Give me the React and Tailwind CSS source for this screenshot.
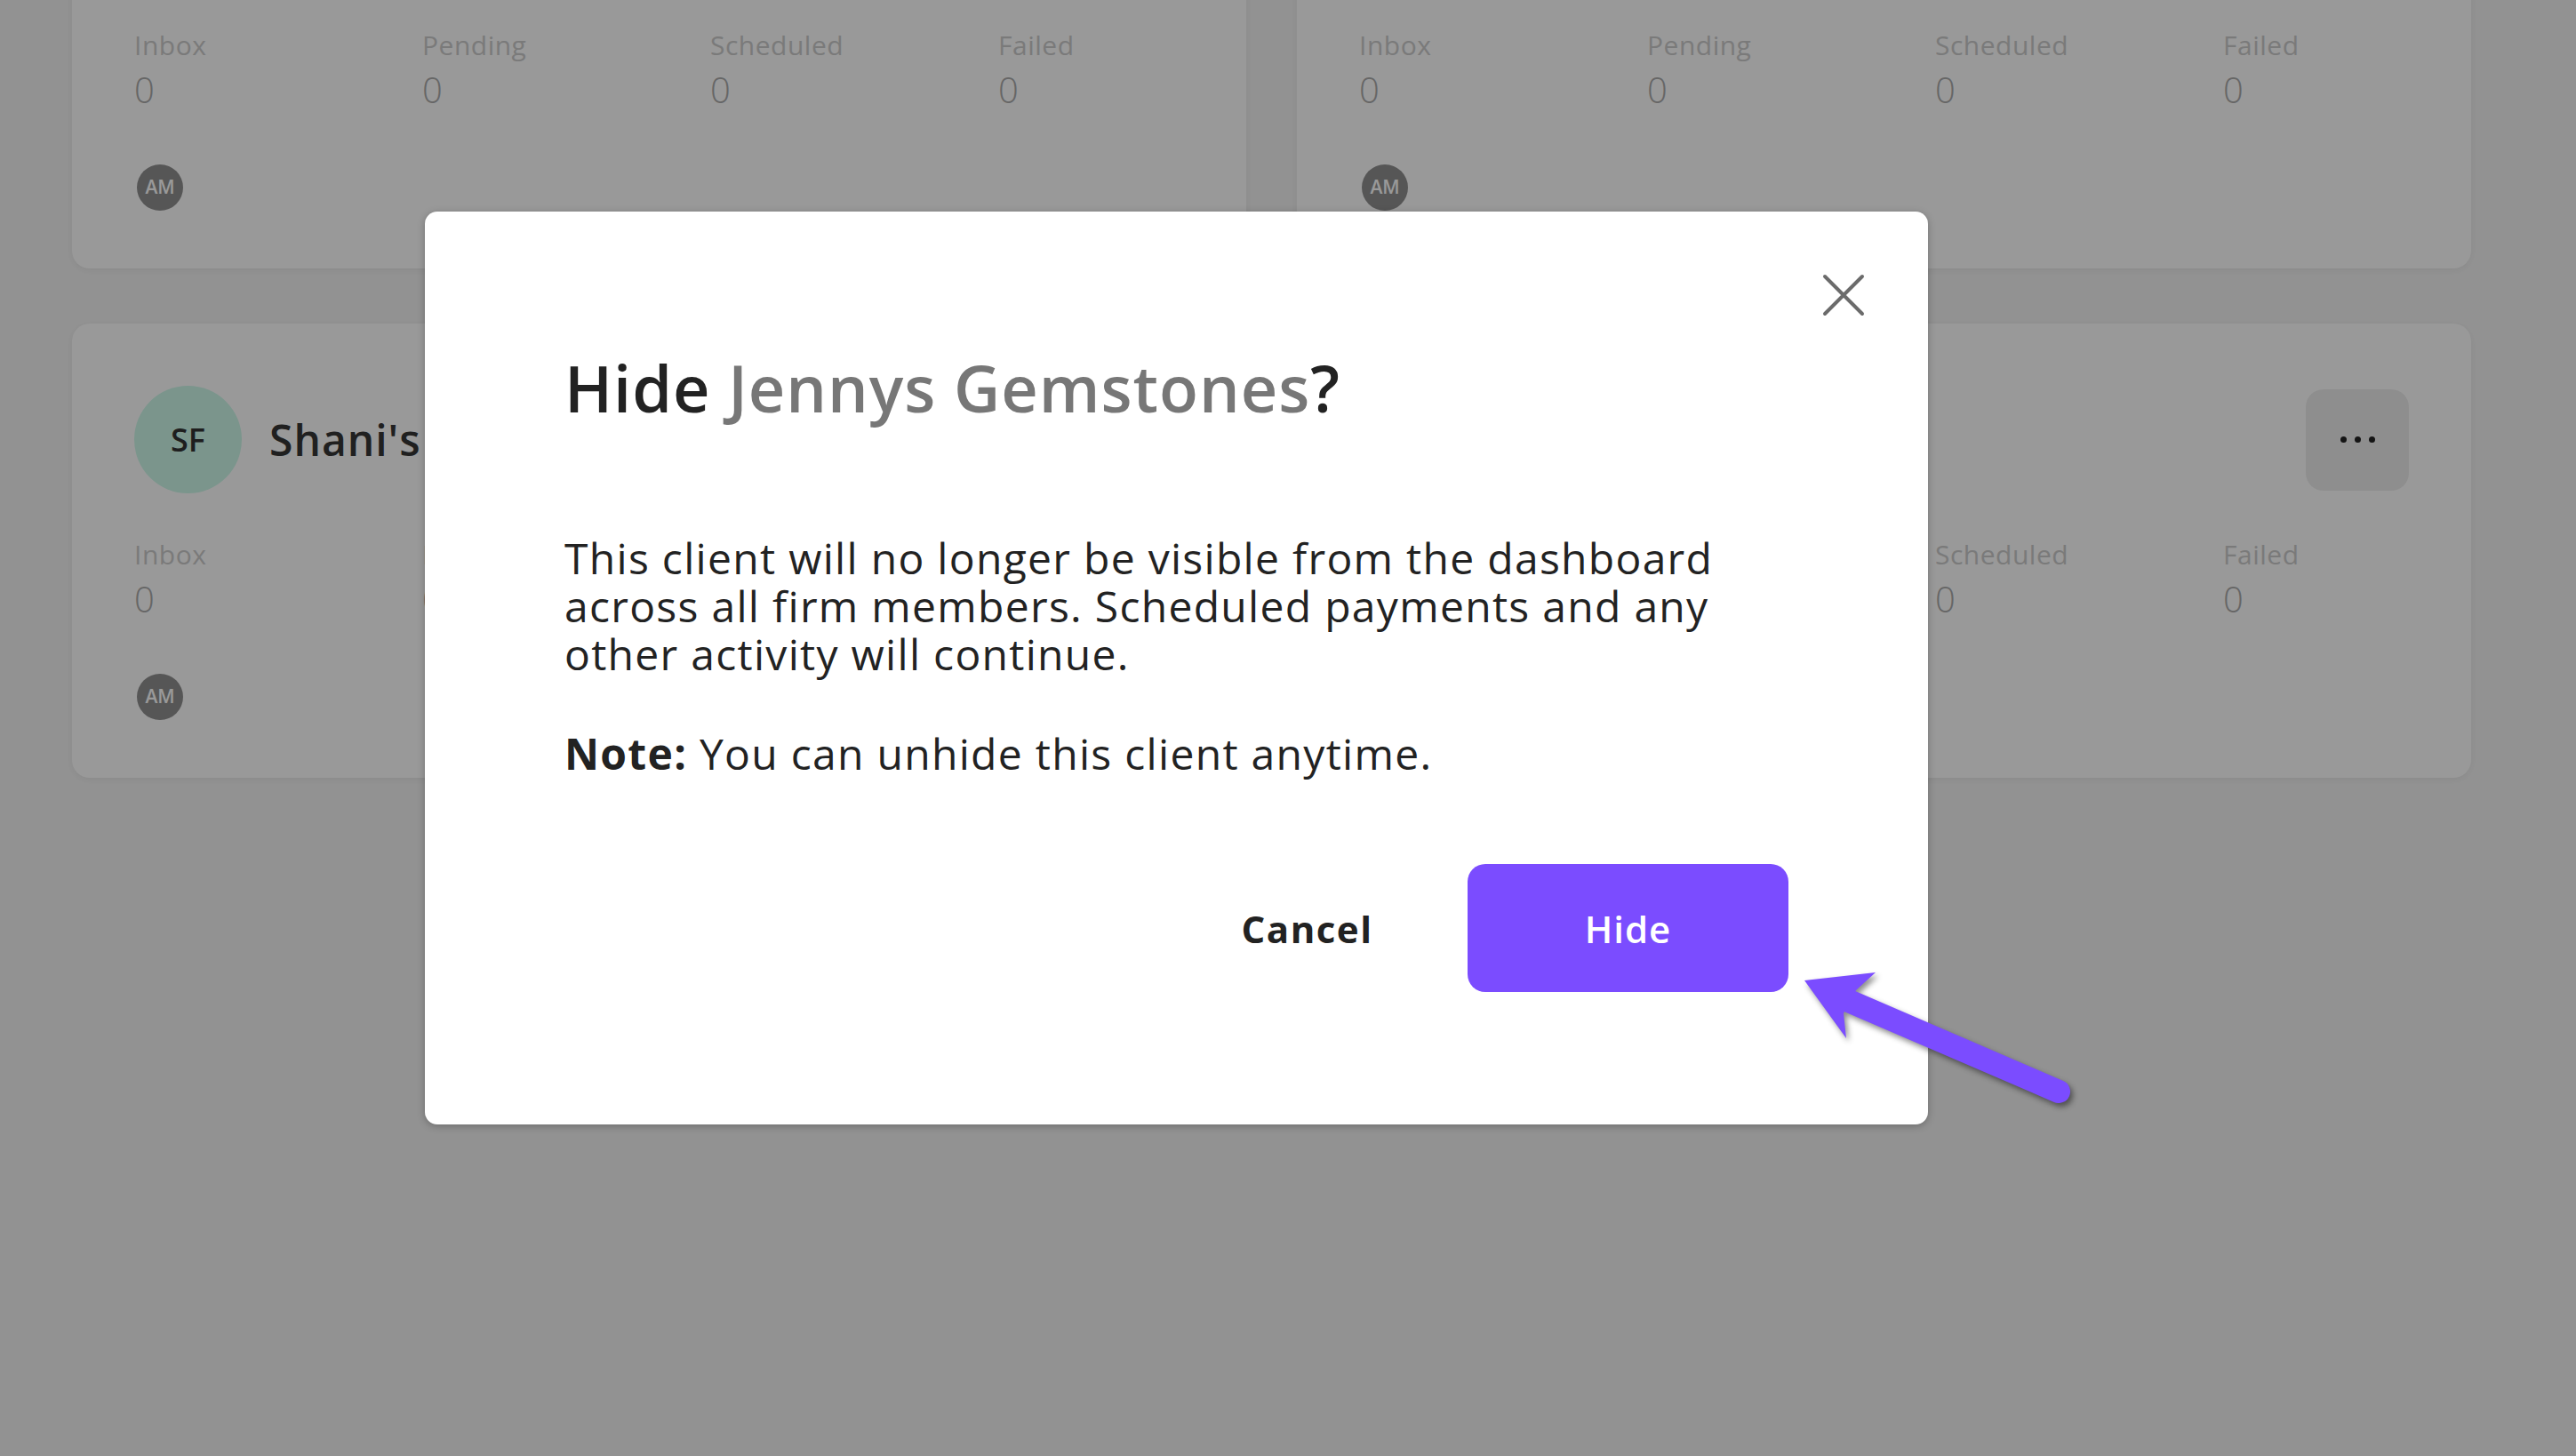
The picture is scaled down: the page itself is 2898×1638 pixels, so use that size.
import React from "react";

const stats = ["Inbox", "Pending", "Scheduled", "Failed"];

const ClientCard = ({ initials, name, avatarBg }) => {
  return (
    <div className="rounded-[20px] bg-white px-[70px] pt-[70px] pb-[65px] shadow-[0_2px_8px_rgba(0,0,0,0.06)]">
      {/* header */}
      <div className="flex h-[121px] items-center justify-between">
        <div className="flex items-center gap-[31px]">
          <span
            className={`flex h-[121px] w-[121px] items-center justify-center rounded-full text-[36px] font-semibold text-[#333] ${avatarBg}`}
          >
            {initials}
          </span>
          {name && <span className="text-[48px] font-semibold tracking-[1px] text-[#363636]">{name}</span>}
        </div>
        <button className="flex h-[114px] w-[116px] items-center justify-center gap-[9px] rounded-[20px] bg-[#ededed]">
          <span className="h-[7px] w-[7px] rounded-full bg-[#222]" />
          <span className="h-[7px] w-[7px] rounded-full bg-[#222]" />
          <span className="h-[7px] w-[7px] rounded-full bg-[#222]" />
        </button>
      </div>

      <div className="mt-[52px] flex">
        {stats.map((label) => (
          <div key={label} className="w-[324px] shrink-0">
            <div className="text-[30px] leading-[34px] tracking-[0.5px] text-[#cccccc]">{label}</div>
            <div className="mt-[9px] text-[40px] font-light leading-[48px] text-[#aaaaaa]">0</div>
          </div>
        ))}
      </div>

      {/* assignee */}
      <span className="ml-[3px] mt-[60px] flex h-[52px] w-[52px] items-center justify-center rounded-full bg-[#909090] text-[21px] font-semibold text-white">
        AM
      </span>
    </div>
  );
};

export default function App() {
  return (
    <div className="relative h-[1638px] w-full overflow-hidden bg-[#f4f4f4] font-['Open_Sans',sans-serif]">
      <div className="-mt-[209px] grid grid-cols-2 gap-x-[57px] gap-y-[62px] pl-[81px] pr-[118px]">
        <ClientCard avatarBg="bg-[#fde2cf]" />
        <ClientCard avatarBg="bg-[#dbe6ff]" />
        <ClientCard initials="SF" name="Shani's Flowers" avatarBg="bg-[#cdf9ea]" />
        <ClientCard initials="JG" name="Jennys Gemstones" avatarBg="bg-[#e8dcff]" />
      </div>

      {/* overlay */}
      <div className="absolute inset-0 bg-black/40" />

      {/* modal */}
      <div className="absolute left-[478px] top-[238px] w-[1691px] rounded-[14px] bg-white px-[157px] pt-[155px] pb-[149px] shadow-[0_2px_8px_rgba(0,0,0,0.25)]">
        <button className="absolute right-[71px] top-[70px]">
          <svg width="48" height="48" viewBox="0 0 48 48">
            <path d="M3 3L45 45M45 3L3 45" stroke="#6b6b6b" strokeWidth="4" strokeLinecap="round" />
          </svg>
        </button>

        <h2 className="text-[72px] font-semibold leading-[86px] tracking-[1px] text-[#222]">
          Hide <span className="text-[#777]">Jennys Gemstones</span>?
        </h2>

        <p className="mt-[122px] text-[48px] leading-[54px] tracking-[1.3px] text-[#222]">
          This client will no longer be visible from the dashboard
          <br />
          across all firm members. Scheduled payments and any
          <br />
          other activity will continue.
        </p>

        <p className="mt-[58px] text-[48px] leading-[54px] tracking-[1.3px] text-[#222]">
          <span className="font-bold">Note:</span> You can unhide this client anytime.
        </p>

        <div className="mt-[97px] flex justify-end">
          <button className="h-[144px] w-[361px] rounded-[20px] text-[42px] font-bold tracking-[1.5px] text-[#222]">
            Cancel
          </button>
          <button className="h-[144px] w-[361px] rounded-[20px] bg-[#7b4cff] text-[42px] font-semibold tracking-[1px] text-white">
            Hide
          </button>
        </div>
      </div>

      {/* pointer arrow */}
      <svg
        className="absolute left-[2000px] top-[1070px] drop-shadow-[3px_4px_3px_rgba(0,0,0,0.45)]"
        width="350"
        height="190"
        viewBox="0 0 350 190"
      >
        <line x1="82" y1="57" x2="316" y2="158" stroke="#7b4cff" strokeWidth="26" strokeLinecap="round" />
        <polygon points="30,33 110,24 88,44 74,70 77,98" fill="#7b4cff" />
      </svg>
    </div>
  );
}
